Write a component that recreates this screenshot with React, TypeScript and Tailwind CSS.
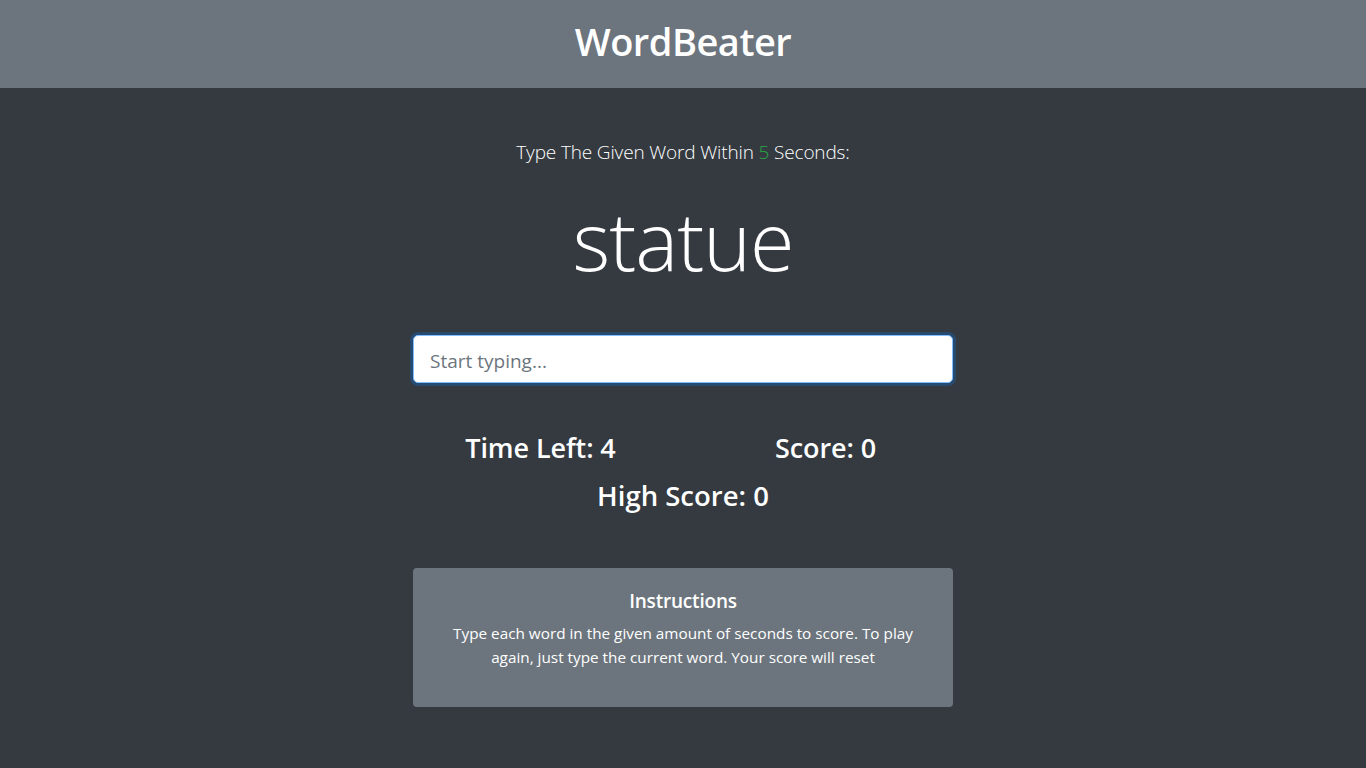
import { useState } from "react";

const font = { fontFamily: '"Open Sans", "Noto Sans", sans-serif' };

const App = () => {
  const [value, setValue] = useState("");

  return (
    <div className="min-h-screen bg-[#343a40] text-white" style={font}>
      {/* Header */}
      <header className="h-[88px] bg-[#6c757d] flex items-center justify-center pb-[6px]">
        <h1 className="text-[38px] font-semibold leading-none tracking-[-0.5px]">WordBeater</h1>
      </header>

      <main className="mx-auto w-[540px] pt-[49px] pb-10 text-center">
        <p className="text-[19px] font-light leading-[30px] tracking-[-0.15px]">
          Type The Given Word Within <span className="text-[#28a745]">5</span> Seconds:
        </p>

        <h2 className="mt-[20px] text-[81px] font-light leading-[106px] tracking-[-1px]">statue</h2>

        <input
          type="text"
          value={value}
          onChange={(e) => setValue(e.target.value)}
          placeholder="Start typing..."
          className="mt-[42px] block w-full h-[48px] px-4 pt-[3px] rounded-[5px] bg-white text-[19px] text-[#495057] placeholder:text-[#6c757d] border border-[#80bdff] outline-none shadow-[0_0_0_3px_rgba(0,123,255,0.25)]"
        />

        {/* Stats */}
        <div className="-mx-[15px] mt-[48px] grid grid-cols-2">
          <h3 className="text-[27px] font-semibold leading-[34px] tracking-[-0.1px]">Time Left: 4</h3>
          <h3 className="text-[27px] font-semibold leading-[34px] tracking-[-0.1px]">Score: 0</h3>
        </div>
        <h3 className="mt-[14px] text-[27.5px] font-semibold leading-[34px] tracking-[0px]">High Score: 0</h3>

        {/* Instructions */}
        <div className="mt-[55px] rounded-[4px] bg-[#6c757d] px-5 pt-[21px] pb-[38px]">
          <h5 className="text-[19px] font-semibold leading-[24px] tracking-[-0.2px]">Instructions</h5>
          <p className="mt-[8px] text-[15.3px] leading-[24px]">
            Type each word in the given amount of seconds to score. To play again, just type the current word. Your score will reset
          </p>
        </div>
      </main>
    </div>
  );
};

export default App;
